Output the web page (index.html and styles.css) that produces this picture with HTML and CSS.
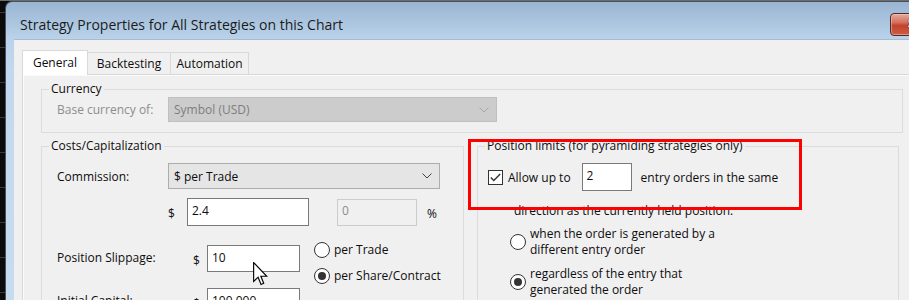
FILE: index.html
```html
<!DOCTYPE html>
<html lang="en">
<head>
    <meta charset="UTF-8">
    <link rel="stylesheet" href="styles.css">
</head>
<body>
    <div class="screen">
        <div class="window">
            <div class="titlebar">
                <span class="title">Strategy Properties for All Strategies on this Chart</span>
                <span class="close-btn"><span class="close-x">✕</span></span>
            </div>
            <div class="client">
                <div class="tabs">
                    <div class="tab active">General</div>
                    <div class="tab tab-backtesting">Backtesting</div>
                    <div class="tab tab-automation">Automation</div>
                </div>
                <div class="panel">
                    <fieldset class="group currency">
                        <legend>Currency</legend>
                        <div class="row currency-row">
                            <span class="label disabled">Base currency of:</span>
                            <div class="combo combo-disabled">
                                <span>Symbol (USD)</span>
                                <svg class="chevron" width="10" height="6" viewBox="0 0 10 6"><polyline points="0.5,0.5 5,5 9.5,0.5" fill="none" stroke="#a8a8a8" stroke-width="1"/></svg>
                            </div>
                        </div>
                    </fieldset>

                    <div class="columns">
                        <fieldset class="group costs">
                            <legend>Costs/Capitalization</legend>
                            <div class="row commission-row">
                                <span class="label label-short">Commission:</span>
                                <div class="combo combo-commission">
                                    <span>$ per Trade</span>
                                    <svg class="chevron" width="10" height="6" viewBox="0 0 10 6"><polyline points="0.5,0.5 5,5 9.5,0.5" fill="none" stroke="#444" stroke-width="1"/></svg>
                                </div>
                            </div>
                            <div class="row amount-row">
                                <span class="unit unit-dollar">$</span>
                                <div class="input input-amount">2.4</div>
                                <div class="input input-percent disabled-input">0</div>
                                <span class="unit unit-percent">%</span>
                            </div>
                            <div class="row slippage-row">
                                <span class="label label-long">Position Slippage:</span>
                                <span class="unit unit-small">$</span>
                                <div class="input input-small">10</div>
                                <div class="radio-list">
                                    <div class="radio-item"><span class="radio"></span><span>per Trade</span></div>
                                    <div class="radio-item"><span class="radio checked"></span><span>per Share/Contract</span></div>
                                </div>
                            </div>
                            <div class="row capital-row">
                                <span class="label label-long">Initial Capital:</span>
                                <span class="unit unit-small">$</span>
                                <div class="input input-small">100,000</div>
                            </div>
                        </fieldset>

                        <fieldset class="group limits">
                            <legend>Position limits (for pyramiding strategies only)</legend>
                            <div class="row allow-row">
                                <span class="checkbox">
                                    <svg width="11" height="9" viewBox="0 0 11 9"><polyline points="0.8,4.6 3.8,7.6 10.2,1" fill="none" stroke="#333" stroke-width="1.4"/></svg>
                                </span>
                                <span class="allow-label">Allow up to</span>
                                <div class="input input-count">2</div>
                                <span class="allow-tail">entry orders in the same</span>
                            </div>
                            <div class="direction-text">direction as the currently held position:</div>
                            <div class="option-item">
                                <span class="radio"></span>
                                <span class="option-text">when the order is generated by a<br>different entry order</span>
                            </div>
                            <div class="option-item">
                                <span class="radio checked"></span>
                                <span class="option-text">regardless of the entry that<br>generated the order</span>
                            </div>
                        </fieldset>
                    </div>
                </div>
            </div>
        </div>

        <div class="highlight"></div>

        <svg class="cursor" width="15" height="24" viewBox="0 0 13 21">
            <path d="M0.5,0.5 L0.5,17 L4.4,13.3 L7,19.6 L9.3,18.6 L6.8,12.5 L12,12.5 Z" fill="#fff" stroke="#000" stroke-width="1" stroke-linejoin="miter"/>
        </svg>
    </div>
</body>
</html>
```

FILE: styles.css
```css
:root {
    --text-color: #0d0d0d;
    --disabled-text: #8d8d8d;
    --group-border: #dcdcdc;
    --tab-border: #d9d9d9;
    --input-border: #7a7a7a;
    --client-bg: #f0f0f0;
}

* {
    box-sizing: border-box;
}

body {
    margin: 0;
    font-family: "Open Sans", "Noto Sans", sans-serif;
    font-size: 12px;
    color: var(--text-color);
    background: #0b0b0b;
}

.screen {
    position: relative;
    width: 909px;
    height: 300px;
    overflow: hidden;
    padding: 1px 0 0 5px;
    background:
        linear-gradient(to bottom, #6c6c6c 0, #6c6c6c 1px, transparent 1px),
        repeating-linear-gradient(to bottom, transparent 0, transparent 12px, #3a3a3a 12px, #3a3a3a 13px, transparent 13px, transparent 35px),
        #0b0b0b;
}

/* window frame */

.window {
    width: 935px;
    height: 320px;
    border: 1px solid #46525f;
    border-bottom: none;
    border-radius: 7px 7px 0 0;
    padding: 0 0 0 8px;
    background: linear-gradient(to bottom, #9ab5d2 0, #b9d2ea 36px, #c3d8ee 70px, #c8dcf0 100%);
}

.titlebar {
    display: flex;
    height: 37px;
    margin-left: -8px;
    padding: 14px 6px 0 14px;
}

.title {
    flex: 1;
    font-size: 14px;
    line-height: 17px;
    color: #1b1b1b;
}

.close-btn {
    display: flex;
    justify-content: center;
    width: 43px;
    height: 23px;
    margin-top: -3px;
    border: 1px solid #4a2c2a;
    border-radius: 4px;
    background: linear-gradient(to bottom, #e6aa9d 0, #d4715d 40%, #c2432c 55%, #cf5e44 100%);
    box-shadow: inset 0 0 0 1px rgba(255, 210, 200, 0.45);
}

.close-x {
    color: #fff;
    font-family: "DejaVu Sans", sans-serif;
    font-weight: bold;
    font-size: 12px;
    line-height: 20px;
    text-shadow: 0 0 2px #5a1b12, 0 0 1px #5a1b12;
}

.client {
    height: 300px;
    background: var(--client-bg);
    border-top: 1px solid #a8bbd0;
    padding: 10px 0 0 8px;
}

/* tabs */

.tabs {
    display: flex;
    align-items: flex-end;
    position: relative;
    z-index: 1;
}

.tab {
    height: 22px;
    line-height: 21px;
    text-align: center;
    border: 1px solid var(--tab-border);
    border-bottom: none;
    background: #f0f0f0;
}

.tab.active {
    width: 66px;
    height: 25px;
    line-height: 23px;
    margin-bottom: -1px;
    background: #fff;
}

.tab-backtesting {
    width: 83px;
    border-left: none;
}

.tab-automation {
    width: 78px;
    border-left: none;
}

.panel {
    border: 1px solid var(--tab-border);
    border-right: none;
    box-shadow: inset 1px 1px 0 #fbfbfb;
    padding: 7px 0 0 18px;
    height: 240px;
}

/* group boxes */

.group {
    margin: 0;
    min-width: 0;
    border: 1px solid var(--group-border);
    padding: 0 0 10px 7px;
}

.group legend {
    padding: 0 2px;
    line-height: 14px;
}

.currency {
    width: 862px;
}

.row {
    display: flex;
    align-items: center;
}

.currency-row {
    padding-left: 8px;
    margin-top: 1px;
}

.label {
    flex-shrink: 0;
}

.label.disabled {
    color: var(--disabled-text);
    width: 111px;
}

.combo {
    display: flex;
    align-items: center;
    justify-content: space-between;
    padding: 0 5px 0 5px;
}

.combo-disabled {
    width: 329px;
    height: 25px;
    background: #cccccc;
    border: 1px solid #bfbfbf;
    color: #7e7e7e;
}

.combo-commission {
    width: 272px;
    height: 26px;
    background: #e5e5e5;
    border: 1px solid #adadad;
}

.chevron {
    margin-right: 2px;
}

.columns {
    display: flex;
    gap: 13px;
    margin-top: 6px;
}

.costs {
    width: 423px;
    height: 200px;
}

.limits {
    width: 422px;
    height: 200px;
}

/* costs/capitalization */

.commission-row {
    padding-left: 8px;
    margin-top: 10px;
}

.label-short {
    width: 111px;
}

.label-long {
    width: 136px;
    margin-top: 8px;
}

.amount-row {
    padding-left: 119px;
    margin-top: 9px;
}

.unit-dollar {
    width: 19px;
    padding-top: 2px;
}

.unit-percent {
    margin-left: 10px;
    padding-top: 2px;
}

.input {
    display: flex;
    align-items: center;
    padding: 0 4px 2px;
    background: #fff;
    border: 1px solid var(--input-border);
    line-height: 16px;
}

.input-amount {
    width: 122px;
    height: 28px;
}

.input-percent {
    width: 80px;
    height: 27px;
    margin-left: 28px;
}

.disabled-input {
    background: #f0f0f0;
    border-color: #cccccc;
    color: var(--disabled-text);
}

.slippage-row {
    align-items: flex-start;
    padding-left: 8px;
    margin-top: 15px;
}

.unit-small {
    width: 14px;
    margin-top: 11px;
}

.input-small {
    width: 93px;
    height: 27px;
    margin-top: 4px;
}

.radio-list {
    display: flex;
    flex-direction: column;
    gap: 10px;
    margin-left: 14px;
    margin-top: 1px;
}

.radio-item {
    display: flex;
    align-items: center;
    gap: 4px;
    line-height: 16px;
}

.radio {
    position: relative;
    flex-shrink: 0;
    width: 16px;
    height: 16px;
    border: 1px solid #333;
    border-radius: 50%;
    background: #fff;
}

.radio.checked::after {
    content: "";
    position: absolute;
    left: 3px;
    top: 3px;
    width: 8px;
    height: 8px;
    border-radius: 50%;
    background: #333;
}

.capital-row {
    align-items: flex-start;
    padding-left: 8px;
    margin-top: 0;
}

/* position limits */

.allow-row {
    padding-left: 3px;
    margin-top: 10px;
}

.checkbox {
    display: flex;
    align-items: center;
    justify-content: center;
    width: 15px;
    height: 15px;
    border: 1px solid #333;
    background: #fff;
}

.allow-label {
    margin-left: 5px;
}

.input-count {
    width: 50px;
    height: 28px;
    margin-left: 11px;
}

.allow-tail {
    margin-left: 9px;
}

.direction-text {
    padding-left: 29px;
    margin-top: 12px;
    line-height: 16px;
}

.option-item {
    display: flex;
    align-items: center;
    gap: 4px;
    padding-left: 25px;
    margin-top: 7px;
}

.option-item + .option-item {
    margin-top: 8px;
}

.option-text {
    line-height: 16px;
}

/* overlays */

.highlight {
    position: absolute;
    left: 468px;
    top: 139px;
    width: 334px;
    height: 71px;
    border: 3px solid #ff0000;
}

.cursor {
    position: absolute;
    left: 253px;
    top: 262px;
}
```
